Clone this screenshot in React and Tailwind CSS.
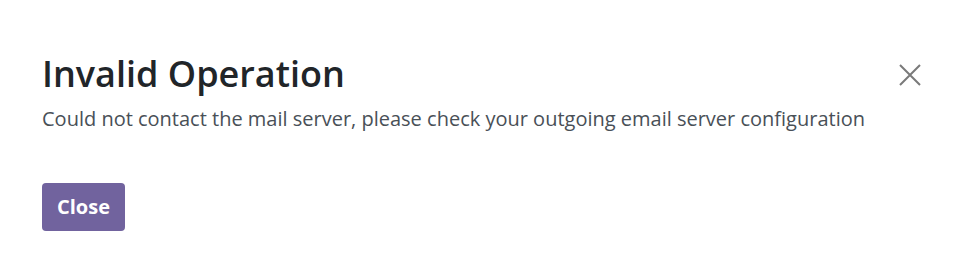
import React from 'react';

const CloseIcon = (
  <svg width="22" height="22" viewBox="0 0 22 22" fill="none">
    <path d="M1 1L21 21M21 1L1 21" stroke="#7a7a7a" strokeWidth="2" />
  </svg>
);

const App = () => {
  return (
    <div
      className="w-[963px] h-[277px] bg-white"
      style={{ fontFamily: '"Open Sans", "Noto Sans", sans-serif' }}>
      <div className="flex items-start justify-between pl-[42px] pr-[42px] pt-[52px]">
        <div>
          <h4 className="text-[36px] leading-[44px] font-semibold text-[#212529]">
            Invalid Operation
          </h4>
          <p className="mt-[8px] text-[20px] leading-[30px] text-[#495057]">
            Could not contact the mail server, please check your outgoing email server configuration
          </p>
        </div>
        <button className="mt-[12px] p-0 text-[#7a7a7a]">{CloseIcon}</button>
      </div>
      <div className="pl-[42px] pt-[49px]">
        <button className="h-[48px] px-[15px] rounded-[4px] bg-[#71639e] text-white text-[20px] font-bold">
          Close
        </button>
      </div>
    </div>
  );
};
export default App;
